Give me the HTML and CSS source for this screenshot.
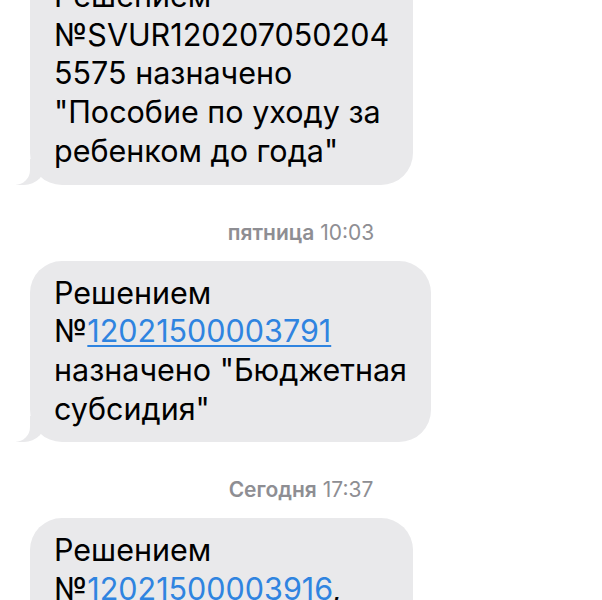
FILE: index.html
```html
<!DOCTYPE html>
<html lang="ru">
<head>
    <meta charset="UTF-8">
    <title>Сообщения</title>
    <link rel="stylesheet" href="styles.css">
</head>
<body>
    <div class="chat">
        <div class="msg-row">
            <div class="bubble">
                Решением<br>
                №SVUR120207050204<br>
                5575 назначено<br>
                "Пособие по уходу за<br>
                ребенком до года"
            </div>
        </div>

        <div class="stamp"><b>пятница</b> 10:03</div>

        <div class="msg-row">
            <div class="bubble">
                Решением<br>
                №<a href="#">12021500003791</a><br>
                назначено "Бюджетная<br>
                субсидия"
            </div>
        </div>

        <div class="stamp"><b>Сегодня</b> 17:37</div>

        <div class="msg-row">
            <div class="bubble">
                Решением<br>
                №<a href="#">12021500003916</a>,<br>
                назначено пособие на<br>
                ребенка
            </div>
        </div>
    </div>
</body>
</html>
```

FILE: styles.css
```css
* {
    margin: 0;
    padding: 0;
    box-sizing: border-box;
}

body {
    background: #ffffff;
    font-family: Inter, "Liberation Sans", Arial, sans-serif;
    overflow: hidden;
}

.chat {
    display: flex;
    flex-direction: column;
    margin-top: -36px;
}

.msg-row {
    display: flex;
    padding-left: 30px;
}

.bubble {
    position: relative;
    background: #e9e9eb;
    color: #000000;
    font-size: 30.5px;
    line-height: 38.7px;
    padding: 13px 24px 14px 24px;
    border-radius: 32px;
}

/* tail */
.bubble::before {
    content: "";
    position: absolute;
    bottom: 0;
    left: -14px;
    width: 30px;
    height: 26px;
    background: #e9e9eb;
    border-bottom-right-radius: 22px;
}

.bubble::after {
    content: "";
    position: absolute;
    bottom: 0;
    left: -24px;
    width: 24px;
    height: 28px;
    background: #ffffff;
    border-bottom-right-radius: 15px;
}

.bubble a {
    color: #2f84e0;
    text-decoration: underline;
    text-decoration-thickness: 2px;
    text-underline-offset: 3px;
}

.stamp {
    text-align: center;
    color: #8e8e93;
    font-size: 21px;
    line-height: 24px;
    margin: 36px 0 16px;
}

.stamp b {
    font-weight: 600;
}
```
